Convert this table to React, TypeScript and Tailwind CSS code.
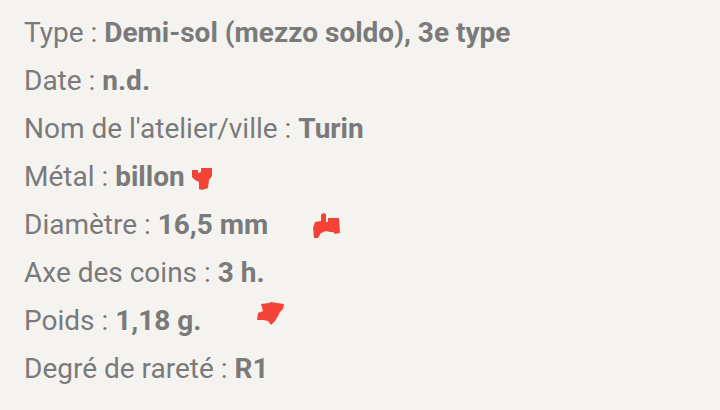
const rows: { label: string; value: string; mark?: "metal" | "diam" | "poids" }[] = [
  { label: "Type", value: "Demi-sol (mezzo soldo), 3e type" },
  { label: "Date", value: "n.d." },
  { label: "Nom de l'atelier/ville", value: "Turin" },
  { label: "Métal", value: "billon", mark: "metal" },
  { label: "Diamètre", value: "16,5 mm", mark: "diam" },
  { label: "Axe des coins", value: "3 h." },
  { label: "Poids", value: "1,18 g.", mark: "poids" },
  { label: "Degré de rareté", value: "R1" },
];

// scribbled red marks over the text (drawn annotations)
function Mark({ kind }: { kind: "metal" | "diam" | "poids" }) {
  if (kind === "metal") {
    return (
      <svg className="absolute left-[168px] top-[15px]" width="21" height="24" viewBox="0 0 21 24">
        <path d="M0 2 L6 2 L6 5 L9 4 L9 0 L20 0 L20 8 L17 12 L16 20 L10 22 L7 21 L7 14 L3 12 L0 9 Z" fill="#f44336" />
      </svg>
    );
  }
  if (kind === "diam") {
    return (
      <svg className="absolute left-[289px] top-[12px]" width="28" height="26" viewBox="0 0 28 26">
        <path d="M8 2 L10 0 L13 1 L13 9 L15 9 L15 5 L26 5 L27 20 L22 21 L20 19 L17 19 L13 18 L8 20 L5 25 L1 25 L0 15 L2 9 L8 8 Z" fill="#f44336" />
      </svg>
    );
  }
  return (
    <svg className="absolute left-[233px] top-[5px]" width="28" height="24" viewBox="0 0 28 24">
      <path d="M4 2 L12 1 L14 0 L20 1 L27 2 L26 7 L23 10 L21 14 L18 19 L14 23 L11 19 L6 18 L0 18 L1 11 L6 9 Z" fill="#f44336" />
    </svg>
  );
}

export default function App() {
  return (
    <div
      className="w-[720px] h-[410px] bg-[#f4f3f0] pt-[9px] pl-[24px] text-[#7a7a7a] text-[28px] overflow-hidden"
      style={{ fontFamily: "Roboto, 'Liberation Sans', sans-serif" }}
    >
      {rows.map((r) => (
        <div key={r.label} className="relative h-[48px] flex items-center whitespace-nowrap">
          <span>
            {r.label} : <span className="font-bold">{r.value}</span>
          </span>
          {r.mark && <Mark kind={r.mark} />}
        </div>
      ))}
    </div>
  );
}
